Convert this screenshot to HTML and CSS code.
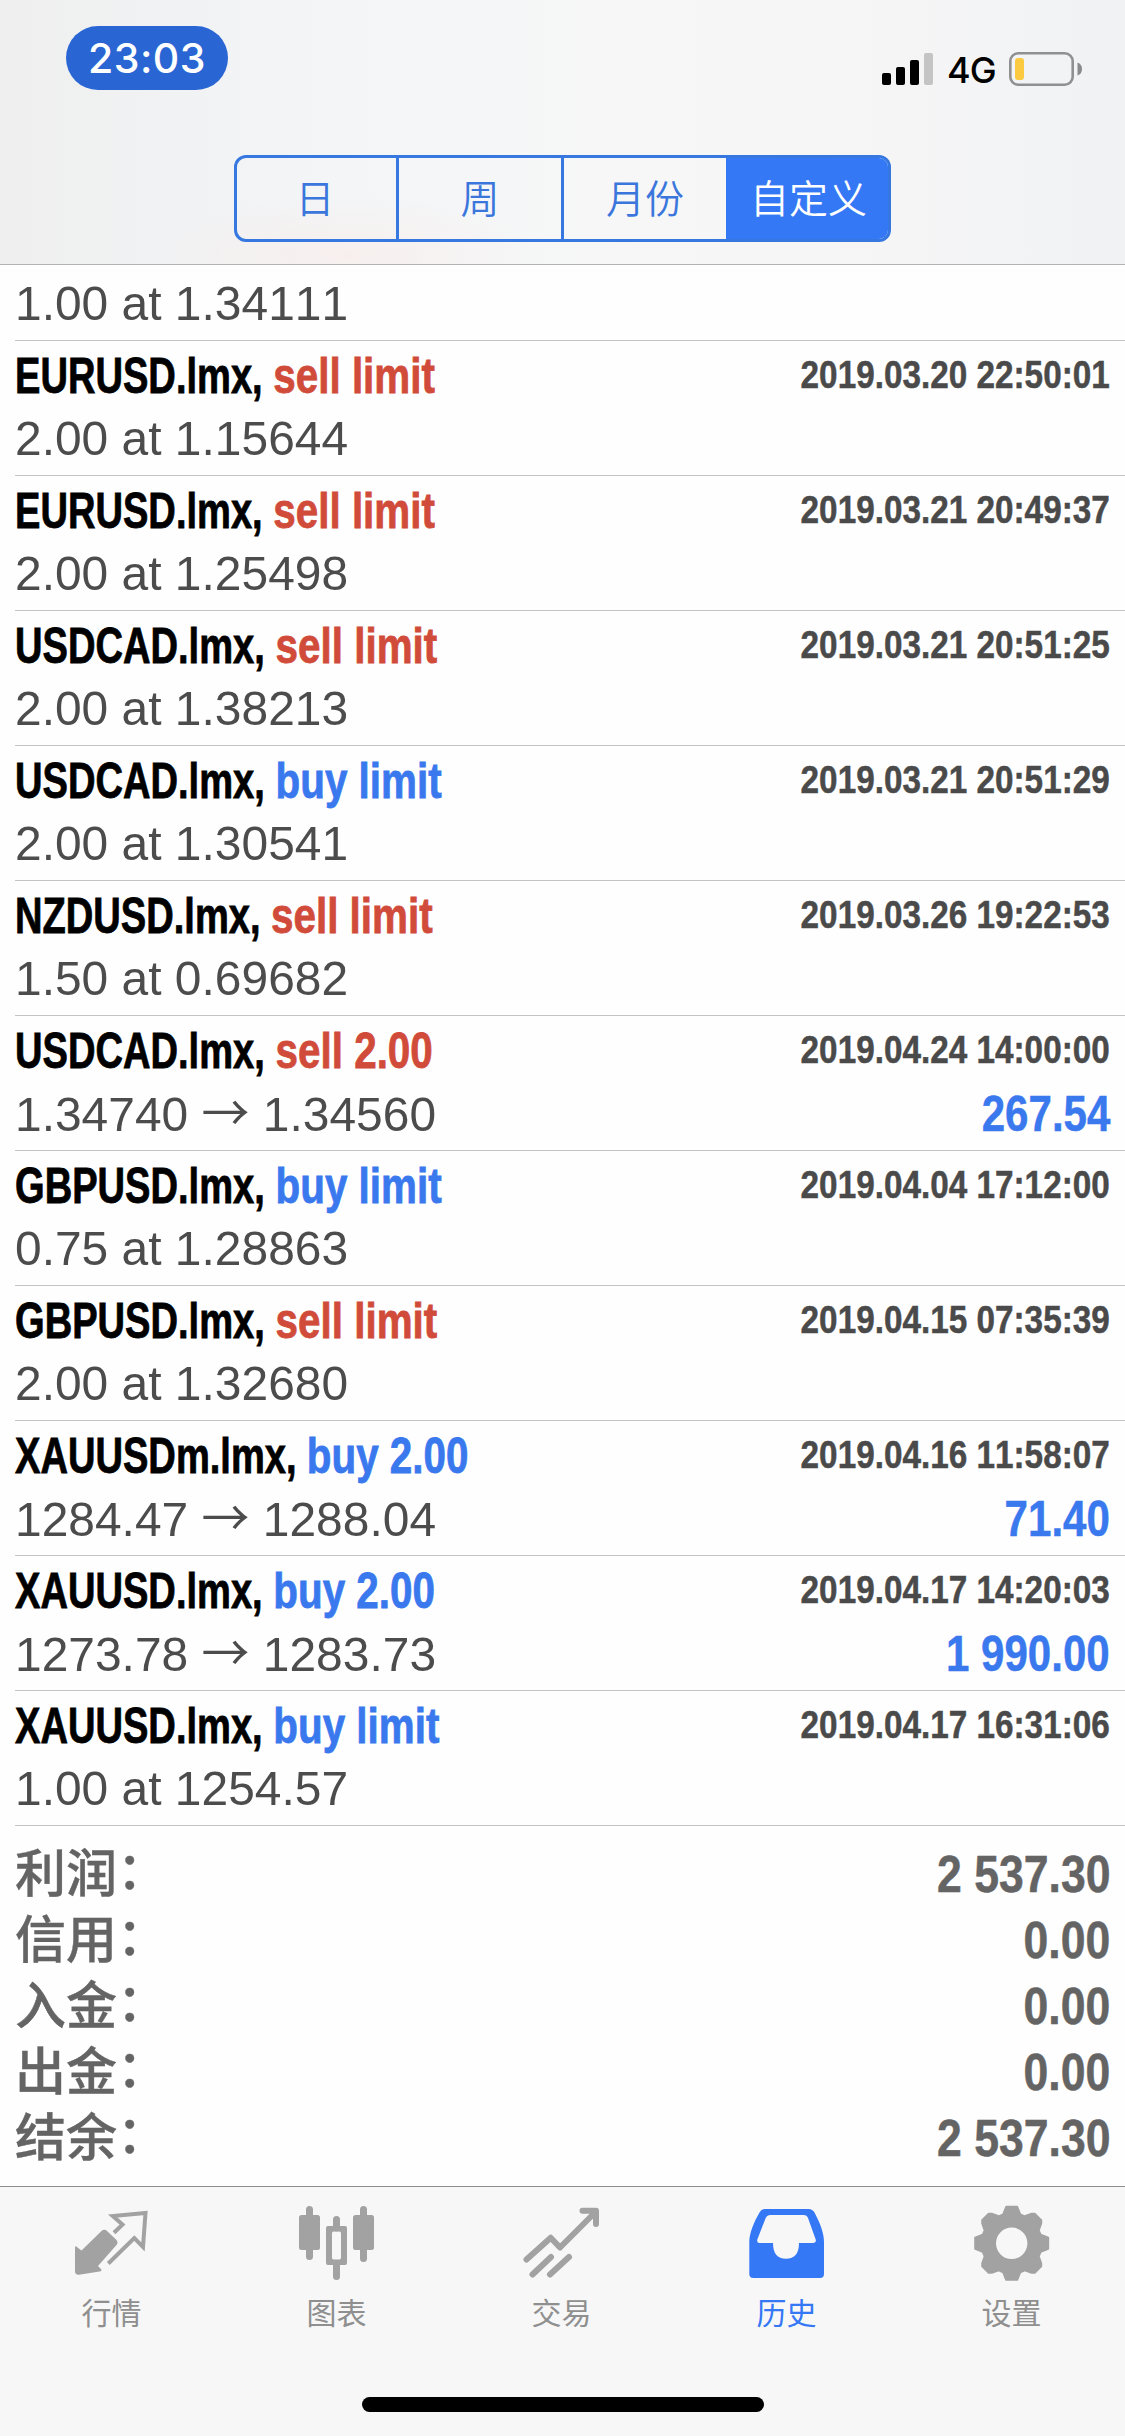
FILE: index.html
```
<!DOCTYPE html>
<html lang="zh-CN">
<head>
<meta charset="utf-8">
<title>历史</title>
<link rel="stylesheet" href="styles.css">
</head>
<body>
<div class="screen">
  <header class="top">
    <div class="status">
      <div class="clock">23:03</div>
      <div class="indicators">
        <svg class="signal" viewBox="0 0 51 32">
          <rect x="0" y="20" width="9" height="12" rx="2"/>
          <rect x="14" y="14" width="9" height="18" rx="2"/>
          <rect x="28" y="7" width="9" height="25" rx="2"/>
          <rect class="dim" x="42" y="0" width="9" height="32" rx="2"/>
        </svg>
        <span class="network">4G</span>
        <svg class="battery" viewBox="0 0 73 34">
          <rect class="shell" x="1.3" y="1.3" width="62.4" height="31.4" rx="8"/>
          <rect class="charge" x="6" y="6" width="9" height="22" rx="3"/>
          <path class="nub" d="M68.500 10.500 Q73 12 73 17 Q73 22 68.500 23.500 Z"/>
        </svg>
      </div>
    </div>
    <nav class="segments">
      <button class="segment">日</button>
      <button class="segment">周</button>
      <button class="segment">月份</button>
      <button class="segment active">自定义</button>
    </nav>
  </header>

  <main class="content">
    <section class="deals">
      <article class="deal partial"><p class="detail"><span class="price">1.00 at 1.34111</span></p></article>
      <article class="deal">
        <p class="title"><span class="name">EURUSD.lmx, <b class="sell">sell limit</b></span><time>2019.03.20 22:50:01</time></p>
        <p class="detail"><span class="price">2.00 at 1.15644</span></p>
      </article>
      <article class="deal">
        <p class="title"><span class="name">EURUSD.lmx, <b class="sell">sell limit</b></span><time>2019.03.21 20:49:37</time></p>
        <p class="detail"><span class="price">2.00 at 1.25498</span></p>
      </article>
      <article class="deal">
        <p class="title"><span class="name">USDCAD.lmx, <b class="sell">sell limit</b></span><time>2019.03.21 20:51:25</time></p>
        <p class="detail"><span class="price">2.00 at 1.38213</span></p>
      </article>
      <article class="deal">
        <p class="title"><span class="name">USDCAD.lmx, <b class="buy">buy limit</b></span><time>2019.03.21 20:51:29</time></p>
        <p class="detail"><span class="price">2.00 at 1.30541</span></p>
      </article>
      <article class="deal">
        <p class="title"><span class="name">NZDUSD.lmx, <b class="sell">sell limit</b></span><time>2019.03.26 19:22:53</time></p>
        <p class="detail"><span class="price">1.50 at 0.69682</span></p>
      </article>
      <article class="deal">
        <p class="title"><span class="name">USDCAD.lmx, <b class="sell">sell 2.00</b></span><time>2019.04.24 14:00:00</time></p>
        <p class="detail"><span class="price">1.34740 <i class="arrow">→</i> 1.34560</span><strong>267.54</strong></p>
      </article>
      <article class="deal">
        <p class="title"><span class="name">GBPUSD.lmx, <b class="buy">buy limit</b></span><time>2019.04.04 17:12:00</time></p>
        <p class="detail"><span class="price">0.75 at 1.28863</span></p>
      </article>
      <article class="deal">
        <p class="title"><span class="name">GBPUSD.lmx, <b class="sell">sell limit</b></span><time>2019.04.15 07:35:39</time></p>
        <p class="detail"><span class="price">2.00 at 1.32680</span></p>
      </article>
      <article class="deal">
        <p class="title"><span class="name">XAUUSDm.lmx, <b class="buy">buy 2.00</b></span><time>2019.04.16 11:58:07</time></p>
        <p class="detail"><span class="price">1284.47 <i class="arrow">→</i> 1288.04</span><strong>71.40</strong></p>
      </article>
      <article class="deal">
        <p class="title"><span class="name">XAUUSD.lmx, <b class="buy">buy 2.00</b></span><time>2019.04.17 14:20:03</time></p>
        <p class="detail"><span class="price">1273.78 <i class="arrow">→</i> 1283.73</span><strong>1 990.00</strong></p>
      </article>
      <article class="deal">
        <p class="title"><span class="name">XAUUSD.lmx, <b class="buy">buy limit</b></span><time>2019.04.17 16:31:06</time></p>
        <p class="detail"><span class="price">1.00 at 1254.57</span></p>
      </article>
    </section>
    <dl class="summary">
      <div class="total"><dt>利润<span class="colon">：</span></dt><dd>2 537.30</dd></div>
      <div class="total"><dt>信用<span class="colon">：</span></dt><dd>0.00</dd></div>
      <div class="total"><dt>入金<span class="colon">：</span></dt><dd>0.00</dd></div>
      <div class="total"><dt>出金<span class="colon">：</span></dt><dd>0.00</dd></div>
      <div class="total"><dt>结余<span class="colon">：</span></dt><dd>2 537.30</dd></div>
    </dl>
  </main>

  <footer class="bottom">
    <nav class="tabs">
      <a class="tab">
        <svg class="icon" viewBox="0 0 85 85">
          <path class="fill" d="M5 48 Q5 45 7.500 47.500 L11.500 50.500 L31.500 31 Q34.500 28.500 37 31 L46.500 40 Q48.500 42.500 46.500 45 L28 66 L31 69 Q32.500 71 29.500 71.500 L9 74.700 Q5 75 5 71 Z"/>
          <path class="line thin" d="M44 32.700 L52.500 24.500 L42.800 16 L75.500 13 L73 47 L64.300 38 L38.300 63.500"/>
        </svg>
        <span>行情</span>
      </a>
      <a class="tab">
        <svg class="icon" viewBox="0 0 85 85">
          <rect class="fill" x="4" y="15" width="21" height="35" rx="2.500"/>
          <rect class="fill" x="58" y="15" width="21" height="35" rx="2.500"/>
          <path class="line thick" d="M14.500 9.500 V56.500 M68.500 9.500 V58.500 M41.500 19.500 V28 M41.500 64 V76.500"/>
          <path class="fill" fill-rule="evenodd" d="M33 26 H50 Q52 26 52 28 V63 Q52 65 50 65 H33 Q31 65 31 63 V28 Q31 26 33 26 Z M38.500 31.500 Q37 31.500 37 33.500 V57.500 Q37 59.500 38.500 59.500 H44.500 Q46 59.500 46 57.500 V33.500 Q46 31.500 44.500 31.500 Z"/>
        </svg>
        <span>图表</span>
      </a>
      <a class="tab">
        <svg class="icon" viewBox="0 0 85 85">
          <path class="line mid" d="M6.500 59.500 L30.700 37.700 L40 47.500 L75.500 12 M62.500 10.800 H76 V24"/>
          <path class="line mid" d="M12.500 74.500 L31 57 M30 74.500 L49 57"/>
        </svg>
        <span>交易</span>
      </a>
      <a class="tab active">
        <svg class="icon" viewBox="0 0 85 85">
          <path class="fill" fill-rule="evenodd" d="M20 9 H63.500 Q67.500 9 69.500 12.500 C75 23 79 33 79 42 V74 Q79 78 75 78 H8.500 Q4.300 78 4.300 74 V42 C4.300 33 9 22 14.500 12.500 Q16.500 9 20 9 Z M25.500 15 Q22 15 20.700 18 L12.300 39.500 Q11.500 43 14.500 43 H28 Q28 58.700 41 58.700 Q54 58.700 54 43 H68.500 Q71.500 42.500 70.700 39.500 L63 18 Q62 15 58.500 15 Z"/>
        </svg>
        <span>历史</span>
      </a>
      <a class="tab">
        <svg class="icon" viewBox="0 0 85 85">
          <path class="fill gear" fill-rule="evenodd" transform="translate(41.700 43.300)" d="M5.500 -36.500 L8.500 -29 L13 -27 L20 -29.500 L23 -29.500 L29.500 -23 L29.500 -20 L27 -13 L29 -8.500 L36.500 -5.500 V5.500 L29 8.500 L27 13 L29.500 20 V23 L23 29.500 H20 L13 27 L8.500 29 L5.500 36.500 H-5.500 L-8.500 29 L-13 27 L-20 29.500 H-23 L-29.500 23 V20 L-27 13 L-29 8.500 L-36.500 5.500 V-5.500 L-29 -8.500 L-27 -13 L-29.500 -20 V-23 L-23 -29.500 H-20 L-13 -27 L-8.500 -29 L-5.500 -36.500 Z M0 -16.700 A16.700 16.700 0 1 0 0 16.700 A16.700 16.700 0 1 0 0 -16.700 Z"/>
        </svg>
        <span>设置</span>
      </a>
    </nav>
    <div class="home-bar"></div>
  </footer>
</div>
</body>
</html>
```
FILE: styles.css
```
* { box-sizing: border-box; }
body, p, dl, dd { margin: 0; }
body { background: #fff; }

.screen {
  width: 1125px;
  height: 2436px;
  display: flex;
  flex-direction: column;
  overflow: hidden;
  background: #fefefe;
  font-family: "Liberation Sans", "Noto Sans CJK SC", sans-serif;
  font-kerning: none;
}

/* Header */
.top {
  height: 265px;
  flex: none;
  border-bottom: 1px solid #b2b2b4;
  background:
    radial-gradient(ellipse 190px 60px at 345px 255px, rgba(255, 228, 222, .35), transparent),
    linear-gradient(90deg, #efefef 0%, #f3f5f7 30%, #f7f7f7 55%, #f5f5f6 80%, #f1f2f4 100%);
}
.status {
  height: 155px;
  display: flex;
  justify-content: space-between;
  align-items: flex-start;
  padding: 26px 43px 0 66px;
}
.clock {
  width: 162px;
  height: 64px;
  border-radius: 32px;
  background: #2966d3;
  color: #fff;
  font: 550 41px/64px Inter, sans-serif;
  letter-spacing: .5px;
  text-align: center;
}
.indicators { display: flex; align-items: center; padding-top: 26px; height: 60px; }
.signal { width: 51px; height: 32px; }
.signal .dim { fill: #c4c4c4; }
.network { margin: 2px 14px 0 14px; width: 48px; font: 450 36px/34px Inter, sans-serif; letter-spacing: -1px; white-space: nowrap; }
.battery { width: 73px; height: 34px; }
.shell { fill: none; stroke: #909090; stroke-width: 2.600; }
.charge { fill: #fcca40; }
.nub { fill: #8a8a8a; }

.segments {
  width: 657px;
  height: 87px;
  margin: 0 auto;
  display: grid;
  grid-template-columns: 162px 165px 162px 162px;
  border: 3px solid #3678e0;
  border-radius: 12px;
  overflow: hidden;
}
.segment {
  padding: 0 3px 5px 0;
  border: 0;
  border-right: 3px solid #3678e0;
  background: none;
  color: #3a76dc;
  font: 350 39px/54px "Noto Sans CJK SC", sans-serif;
}
.segment:nth-child(2) { padding-right: 0; }
.segment:nth-child(3) { padding-right: 0; border-right: 0; }
.segment.active { margin: -3px -3px -3px 0; padding-right: 0; border: 0; background: #3478f6; color: #fff; }

/* Deal list */
.content { flex: 1; }
.deals { padding-left: 15px; }
.deal { height: 135px; border-bottom: 1px solid #c4c4c6; padding-top: 5px; }
.deal.partial { height: 76px; padding-top: 10px; }
.title, .detail { display: flex; justify-content: space-between; padding-right: 15px; white-space: nowrap; }
.title { height: 64px; line-height: 60px; font-weight: 700; }
.name { color: #000; font-size: 50px; transform: scaleX(.762); transform-origin: left; -webkit-text-stroke: .8px; }
.name b { display: inline-block; transform: scaleX(1.06); transform-origin: left; }
.sell { color: #d14b3a; }
.buy { color: #3a78ee; }
time { color: #4a4a4a; font-size: 39.500px; line-height: 56px; transform: scaleX(.843); transform-origin: right; -webkit-text-stroke: .5px; }
.detail { height: 56px; line-height: 56px; color: #4c4c4c; }
.price { font-size: 49px; transform: scaleX(.978); transform-origin: left; }
.arrow { font-family: "Noto Sans CJK SC", sans-serif; font-style: normal; line-height: 1; }
.detail strong { color: #3a78ee; font-size: 49.500px; line-height: 57px; transform: scaleX(.85); transform-origin: right; -webkit-text-stroke: .5px; }

/* Totals */
.summary { padding: 15px 15px 0 15px; color: #646464; font-weight: 700; }
.total { height: 66px; display: flex; justify-content: space-between; align-items: baseline; line-height: 66px; }
.total dt { font-size: 51px; font-weight: 500; -webkit-text-stroke: .4px; }
.colon { line-height: 1; vertical-align: 3px; }
.total dd { font-size: 51.500px; transform: scaleX(.865); transform-origin: right; -webkit-text-stroke: .5px; }

/* Tab bar */
.bottom { height: 250px; flex: none; border-top: 1px solid #8e8e8e; background: #f7f7f7; }
.tabs { display: grid; grid-template-columns: repeat(5, 1fr); }
.tab { display: flex; flex-direction: column; align-items: center; padding-top: 13px; color: #8f8f8f; font: 400 30px/40px "Noto Sans CJK SC", sans-serif; }
.tab span { margin: 6px 2px 0 0; }
.tab.active { color: #3478f6; }
.icon { width: 85px; height: 85px; color: #a2a2a2; }
.active .icon { color: inherit; }
.fill { fill: currentColor; }
.gear { stroke: currentColor; stroke-width: 2; stroke-linejoin: round; }
.line { fill: none; stroke: currentColor; }
.thin { stroke-width: 4; }
.mid { stroke-width: 6; stroke-linejoin: round; stroke-linecap: round; }
.thick { stroke-width: 7; stroke-linecap: round; }
.home-bar { width: 402px; height: 15px; margin: 66px auto 0; border-radius: 8px; background: #000; }
```
